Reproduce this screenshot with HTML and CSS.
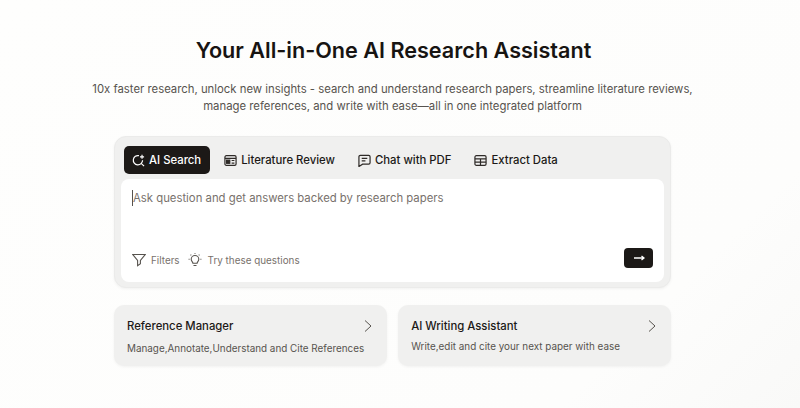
FILE: index.html
```html
<!DOCTYPE html>
<html lang="en">
<head>
<meta charset="utf-8">
<title>AI Research Assistant</title>
<link rel="stylesheet" href="styles.css">
</head>
<body>
<main class="page">
  <h1 class="title">Your All-in-One AI Research Assistant</h1>
  <p class="subtitle">10x faster research, unlock new insights - search and understand research papers, streamline literature reviews, manage references, and write with ease—all in one integrated platform</p>
  <section class="panel">
    <nav class="tabs">
      <button class="tab tab-active">
        <svg class="icon" viewBox="0 0 14 14"><path d="M7.500 1.800A5 5 0 1 0 11.400 6.800M9.600 9.800 13 13"/><path d="M10.800.8v4.400M8.600 3h4.400"/></svg>
        AI Search
      </button>
      <button class="tab">
        <svg class="icon" viewBox="0 0 14 14"><rect x="1" y="1.800" width="12" height="10.400" rx="1.500"/><path d="M1 4.600h12M8.200 7h3M8.200 9.800h3"/><rect class="fill" x="2.800" y="6.600" width="3.400" height="3.400"/></svg>
        Literature Review
      </button>
      <button class="tab">
        <svg class="icon" viewBox="0 0 14 14"><path d="M2.500 1.500h9a1.500 1.500 0 0 1 1.500 1.500v6.500a1.500 1.500 0 0 1-1.500 1.500H5L1 13.500V3a1.500 1.500 0 0 1 1.500-1.500Z"/><path d="M4 4.800h6M4 7.500h4"/></svg>
        Chat with PDF
      </button>
      <button class="tab">
        <svg class="icon" viewBox="0 0 14 14"><rect x="1" y="1.800" width="12" height="10.400" rx="1.500"/><path d="M1 5.200h12M1 8.700h12M7 5.200v7"/></svg>
        Extract Data
      </button>
    </nav>
    <div class="box">
      <div class="input"><span class="caret"></span>Ask question and get answers backed by research papers</div>
      <div class="box-foot">
        <span class="tool">
          <svg class="tool-icon" viewBox="0 0 14 14"><path d="M.8 1.500h12.400L8.400 7.500v3.300l-2.800 2V7.500Z"/></svg>
          Filters
        </span>
        <span class="tool tool-bulb">
          <svg class="tool-icon" viewBox="0 0 14 14"><path d="M4.900 10.300c0-1.400-1.700-2.100-1.700-4a3.800 3.800 0 0 1 7.600 0c0 1.900-1.700 2.600-1.700 4ZM5.500 12.500h3M7 .2v.9M2.600 1.700l.6.600M11.400 1.700l-.6.600M.6 6.200h1M12.400 6.200h1"/></svg>
          Try these questions
        </span>
        <button class="send" aria-label="Submit">
          <svg class="send-icon" viewBox="0 0 12 10"><path d="M1 5h10M8.500 3 11 5 8.500 7"/></svg>
        </button>
      </div>
    </div>
  </section>
  <section class="cards">
    <a class="card">
      <div class="card-text">
        <h2 class="card-title">Reference Manager</h2>
        <p class="card-desc card-desc-low">Manage,Annotate,Understand and Cite References</p>
      </div>
      <svg class="chevron" viewBox="0 0 8 12"><path d="M1 .5 7 6l-6 5.500"/></svg>
    </a>
    <a class="card">
      <div class="card-text">
        <h2 class="card-title">AI Writing Assistant</h2>
        <p class="card-desc">Write,edit and cite your next paper with ease</p>
      </div>
      <svg class="chevron" viewBox="0 0 8 12"><path d="M1 .5 7 6l-6 5.500"/></svg>
    </a>
  </section>
</main>
</body>
</html>
```
FILE: styles.css
```css
* { box-sizing: border-box; }
html, body { height: 100%; }
body {
  margin: 0;
  overflow: hidden;
  font-family: Inter, "Liberation Sans", sans-serif;
  background: linear-gradient(135deg, #fefefd 0%, #fdfdfc 80%, #f9f9f8 100%);
}
.page {
  width: 785px;
  display: flex;
  flex-direction: column;
  align-items: center;
  padding-top: 35px;
}
.title {
  margin: 0;
  padding-left: 2px;
  font-size: 21.6px;
  line-height: 30px;
  font-weight: 600;
  color: #171412;
}
.subtitle {
  margin: 16px 0 0;
  width: 620px;
  text-align: center;
  font-size: 11.340px;
  line-height: 17px;
  color: #57534e;
}
.panel {
  margin-top: 21px;
  width: 557px;
  height: 152px;
  padding: 9px 6px 5px;
  background: #f0f0ef;
  border: 1px solid #ebebea;
  border-radius: 12px;
  box-shadow: 0 1px 3px rgba(0,0,0,.05);
}
.tabs { display: flex; gap: 7px; height: 28px; padding-left: 3px; }
.tab {
  display: flex;
  align-items: center;
  gap: 4px;
  height: 28px;
  padding: 0 8px;
  border: 0;
  border-radius: 5px;
  background: transparent;
  font: 500 11.340px Inter, sans-serif;
  color: #1c1917;
}
.tab-active { background: #1c1917; color: #fff; padding-right: 9px; margin-right: -1px; }
.icon { width: 13px; height: 13px; fill: none; stroke: #2f2b28; stroke-width: 1.300; }
.icon .fill { fill: #2f2b28; }
.tab-active .icon { stroke: #fff; }
.box {
  margin-top: 5px;
  height: 103px;
  background: #fff;
  border-radius: 8px;
  padding: 11px 11px 14px;
  display: flex;
  flex-direction: column;
  justify-content: space-between;
}
.input { font-size: 11.340px; line-height: 16px; color: #78716c; display: flex; }
.caret { width: 1px; height: 16px; background: #57534e; }
.box-foot { display: flex; align-items: flex-end; gap: 8px; height: 20px; }
.tool { display: flex; align-items: center; gap: 5px; height: 14px; margin-bottom: 1px; font-size: 9.900px; color: #78716c; }
.tool-bulb { gap: 6px; }
.tool-icon { width: 14px; height: 14px; fill: none; stroke: #57534e; stroke-width: 1.100; }
.send {
  margin-left: auto;
  width: 29px;
  height: 20px;
  border: 0;
  padding: 0;
  border-radius: 4px;
  background: #1c1917;
  display: flex;
  align-items: center;
  justify-content: center;
}
.send-icon { width: 12px; height: 10px; fill: none; stroke: #fff; stroke-width: 1.300; }
.cards { margin-top: 17px; width: 557px; display: flex; gap: 11px; }
.card {
  flex: 1;
  height: 61px;
  padding: 13px 15px 0 13px;
  display: flex;
  justify-content: space-between;
  background: #f0f0ef;
  border-radius: 10px;
  box-shadow: 0 1px 3px rgba(0,0,0,.05);
}
.card-text { flex: 1; min-width: 0; }
.card-title { margin: 0; font-size: 11.340px; line-height: 16px; font-weight: 500; color: #1c1917; }
.card-desc { margin: 5px 0 0; font-size: 9.900px; line-height: 14px; color: #57534e; white-space: nowrap; }
.card-desc-low { margin-top: 7px; }
.chevron { width: 8px; height: 12px; margin-top: 2px; flex: none; fill: none; stroke: #57534e; stroke-width: 1; }
```
